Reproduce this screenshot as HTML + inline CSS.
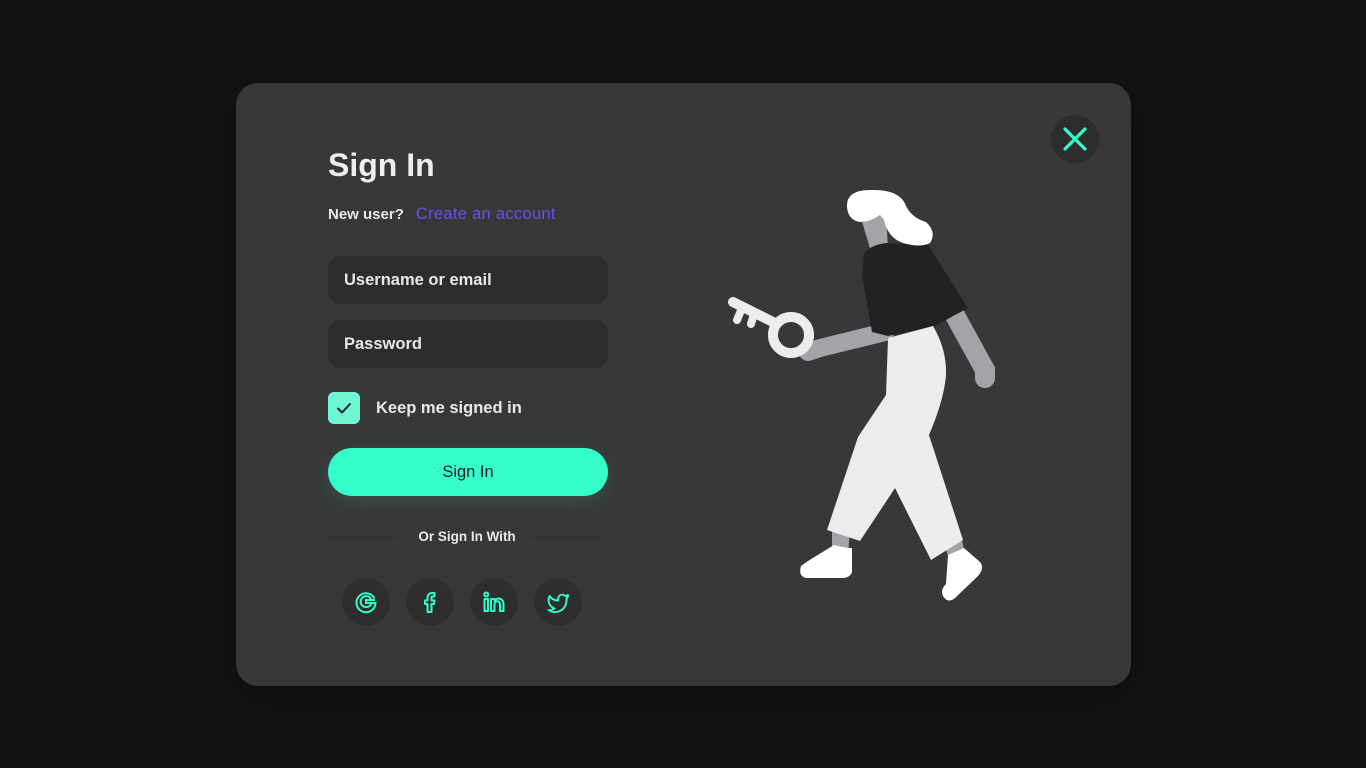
<!DOCTYPE html>
<html><head><meta charset="utf-8"><style>
*{margin:0;padding:0;box-sizing:border-box}
body{width:1366px;height:768px;background:#131313;font-family:"Liberation Sans",sans-serif;position:relative;overflow:hidden}
.card{position:absolute;left:236px;top:83px;width:895px;height:603px;background:#383838;border-radius:22px;box-shadow:0 10px 40px rgba(0,0,0,.35)}
.abs{position:absolute}
h1{position:absolute;left:328px;top:147px;font-size:32px;font-weight:bold;color:#eeeeee;letter-spacing:0}
.nu{left:328px;top:205px;font-size:15px;font-weight:bold;color:#e8e8e8}
.nu span{color:#6c4ef0;font-weight:normal;margin-left:12px;font-size:16.5px;letter-spacing:.3px}
.inp{left:328px;width:280px;height:48px;background:#2d2d2d;border-radius:12px;color:#e8e8e8;font-size:16.5px;font-weight:bold;padding-left:16px;line-height:48px}
.cb{left:328px;top:392px;width:32px;height:32px;background:#6ef6d3;border-radius:6px}
.btn{left:328px;top:448px;width:280px;height:48px;background:#34fdc9;border-radius:24px;text-align:center;line-height:48px;font-size:16.5px;color:#222;box-shadow:0 6px 20px rgba(52,253,201,.12)}
.line{top:537px;height:1px;background:#2f2f35}
.soc{top:578px;width:48px;height:48px;border-radius:50%;background:#2e2e2e}
.soc svg{position:absolute;left:12px;top:12px}
</style></head><body>
<div class="card"></div>
<div class="abs" style="left:1051px;top:115px;width:48px;height:48px;border-radius:50%;background:#2d2d2d"></div>
<svg class="abs" style="left:1051px;top:115px" width="48" height="48"><path d="M14 14L34 34M34 14L14 34" stroke="#34fdc9" stroke-width="3.2" stroke-linecap="round"/></svg>
<h1>Sign In</h1>
<div class="abs nu">New user?<span>Create an account</span></div>
<div class="abs inp" style="top:256px">Username or email</div>
<div class="abs inp" style="top:320px">Password</div>
<div class="abs cb"><svg width="32" height="32"><path d="M10 16.5l4 4 8-8.5" stroke="#222" stroke-width="2" fill="none" stroke-linecap="round" stroke-linejoin="round"/></svg></div>
<div class="abs" style="left:376px;top:399px;font-size:16.5px;font-weight:bold;color:#e8e8e8">Keep me signed in</div>
<div class="abs btn">Sign In</div>
<div class="abs line" style="left:328px;width:70px"></div>
<div class="abs line" style="left:530px;width:70px"></div>
<div class="abs" style="left:328px;width:278px;text-align:center;top:529px;font-size:13.5px;font-weight:bold;color:#e8e8e8">Or Sign In With</div>
<div class="abs soc" style="left:342px"><svg width="24" height="24" fill="none" stroke="#34fdc9" stroke-width="2"><path d="M20.5 8.5A9.5 9.5 0 1 0 21.5 13H12v-3h9"/><path d="M17 9A5.5 5.5 0 1 0 17.5 13"/></svg></div>
<div class="abs soc" style="left:406px"><svg width="24" height="24" fill="none" stroke="#34fdc9" stroke-width="2" stroke-linejoin="round"><path d="M9.5 22V14H7V10.5H9.5V7.5A4.5 4.5 0 0 1 14 3H16.5V6.5H14.5Q13.5 6.5 13.5 7.5V10.5H16.5L16 14H13.5V22Z"/></svg></div>
<div class="abs soc" style="left:470px"><svg width="24" height="24" fill="none" stroke="#34fdc9" stroke-width="2" stroke-linejoin="round"><rect x="2.5" y="9" width="3.5" height="12"/><circle cx="4.2" cy="4.5" r="2"/><path d="M9 21V9h3.5v1.5a5 5 0 0 1 9 3V21h-3.5v-7a2 2 0 0 0-5.5 0v7z"/></svg></div>
<div class="abs soc" style="left:534px"><svg width="24" height="24" fill="none" stroke="#34fdc9" stroke-width="1.9" stroke-linejoin="round"><path d="M22 5c-1 .6-1.9.9-2.8 1A4 4 0 0 0 12.3 9.5v1C8.5 10.6 5.8 9 3.5 6c0 0-4 8.5 5 12.5-1.8 1.2-3.6 1.8-6 1.7 8.5 4.8 18 0 18-10.5 0-.3 0-.6-.1-.9 1-1 1.7-2.2 1.6-3.8z"/></svg></div>

<svg class="abs" style="left:0;top:0" width="1366" height="768">
<path d="M952 310L985 370L985 378" stroke="#a3a3a8" stroke-width="20" stroke-linecap="round" fill="none"/>
<path d="M885 332L820 348L808 352" stroke="#a3a3a8" stroke-width="18" stroke-linecap="round" fill="none"/>
<path d="M733 302L775 323" stroke="#ececec" stroke-width="10" stroke-linecap="round"/>
<path d="M742 308L737 320M754 314L751 324" stroke="#ececec" stroke-width="8" stroke-linecap="round"/>
<circle cx="791" cy="335" r="18" fill="none" stroke="#ececec" stroke-width="10"/>
<path d="M860 215L886 212L888 250L872 255Z" fill="#a3a3a8"/>
<path d="M832 530L850 530L848 555L832 555Z" fill="#a3a3a8"/>
<path d="M945 545L962 540L966 560L950 565Z" fill="#a3a3a8"/>
<path d="M864 254Q870 245 886 243L928 245L968 308L955 315L935 326L888 336L872 332L862 275Z" fill="#222222"/>
<path d="M888 338L933 326Q947 350 946 375Q944 400 929 435L963 540L931 560L895 488L860 541L827 530L858 437L886 395Z" fill="#ececec"/>
<path d="M847 207Q846 190 870 190Q900 189 906 206Q912 218 926 222Q937 232 930 243Q920 248 903 243Q888 238 884 220L880 215Q870 222 860 222Q848 220 847 207Z" fill="#ffffff"/>
<path d="M808 561L834 545Q845 548 852 548L852 572Q850 578 842 578L806 578Q798 576 801 566Z" fill="#ffffff"/>
<path d="M948 555L964 548L980 562Q985 568 978 576L955 598Q948 604 943 596Q940 590 946 584Z" fill="#ffffff"/>
</svg>
</body></html>
